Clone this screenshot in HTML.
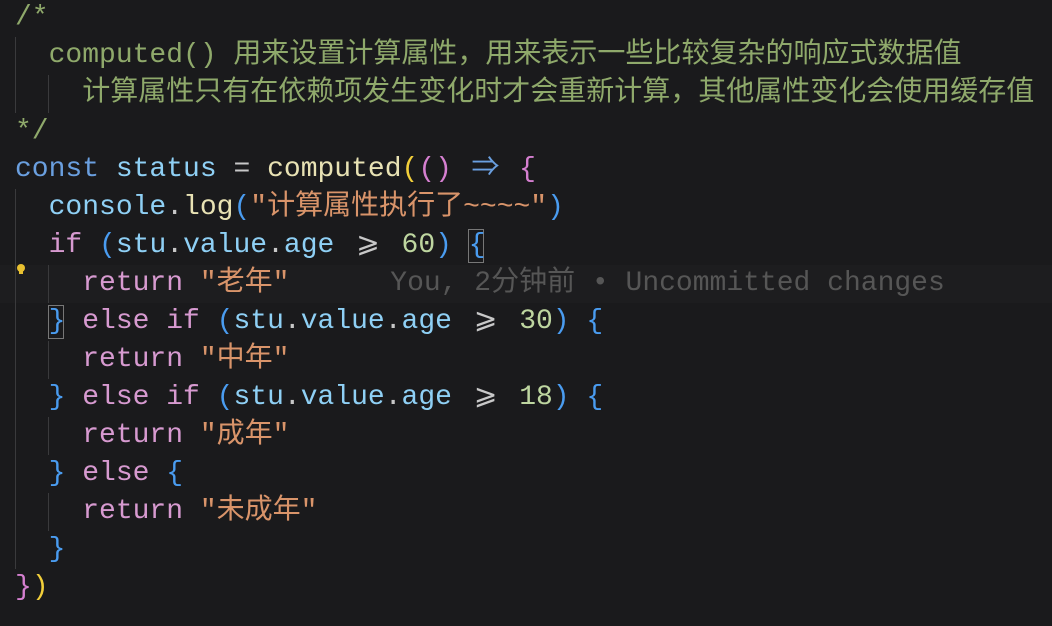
<!DOCTYPE html>
<html><head><meta charset="utf-8"><style>
html,body{margin:0;padding:0;background:#1a1a1c;width:1052px;height:626px;overflow:hidden}
.l{position:absolute;left:15px;height:38px;line-height:38px;white-space:pre;font-family:"Liberation Mono","Noto Sans CJK SC",monospace;font-size:28px;color:#d4d4d4}
.g{position:absolute;width:1px;background:#3a3a3c}
.cm{color:#8fa96b}.kw{color:#6a9fdf}.v{color:#8fd0f5}.fn{color:#e8e2b4}.y{color:#f2cf3a}.p{color:#d57fd0}
.s{color:#d9946a}.k{color:#d79ad0}.n{color:#bed6a0}.b{color:#4a9cf0}.w{color:#c8c8c8}.bl{color:#565656}
.lg{display:inline-block;width:33.6px;text-align:center}
</style></head><body>
<div style="position:absolute;left:0;top:265px;width:1052px;height:38px;background:#1d1d1f"></div>
<div class="g" style="left:15px;top:37px;height:76px"></div>
<div class="g" style="left:48px;top:75px;height:38px"></div>
<div class="g" style="left:15px;top:189px;height:380px"></div>
<div class="g" style="left:48px;top:265px;height:38px"></div>
<div class="g" style="left:48px;top:341px;height:38px"></div>
<div class="g" style="left:48px;top:417px;height:38px"></div>
<div class="g" style="left:48px;top:493px;height:38px"></div>
<div style="position:absolute;left:468px;top:229px;width:14px;height:32px;border:1px solid #777"></div>
<div style="position:absolute;left:48px;top:305px;width:14px;height:32px;border:1px solid #777"></div>
<div style="position:absolute;left:17px;top:264px;width:8px;height:8px;border-radius:50%;background:#e8c030"></div>
<div style="position:absolute;left:19px;top:271px;width:4px;height:3px;background:#e8c030"></div>

<div class="l cm" style="top:-1px">/*</div>
<div class="l cm" style="top:37px">  computed() 用来设置计算属性，用来表示一些比较复杂的响应式数据值</div>
<div class="l cm" style="top:75px">    计算属性只有在依赖项发生变化时才会重新计算，其他属性变化会使用缓存值</div>
<div class="l cm" style="top:113px">*/</div>
<div class="l" style="top:151px"><span class="kw">const</span> <span class="v">status</span> <span class="w">=</span> <span class="fn">computed</span><span class="y">(</span><span class="p">()</span> <span class="kw lg">⇒</span> <span class="p">{</span></div>
<div class="l" style="top:189px">  <span class="v">console</span><span class="w">.</span><span class="fn">log</span><span class="b">(</span><span class="s">"计算属性执行了~~~~"</span><span class="b">)</span></div>
<div class="l" style="top:227px">  <span class="k">if</span> <span class="b">(</span><span class="v">stu</span><span class="w">.</span><span class="v">value</span><span class="w">.</span><span class="v">age</span> <span class="w lg">⩾</span> <span class="n">60</span><span class="b">)</span> <span class="b">{</span></div>
<div class="l" style="top:265px">    <span class="k">return</span> <span class="s">"老年"</span>      <span class="bl">You, 2分钟前 • Uncommitted changes</span></div>
<div class="l" style="top:303px">  <span class="b">}</span> <span class="k">else if</span> <span class="b">(</span><span class="v">stu</span><span class="w">.</span><span class="v">value</span><span class="w">.</span><span class="v">age</span> <span class="w lg">⩾</span> <span class="n">30</span><span class="b">)</span> <span class="b">{</span></div>
<div class="l" style="top:341px">    <span class="k">return</span> <span class="s">"中年"</span></div>
<div class="l" style="top:379px">  <span class="b">}</span> <span class="k">else if</span> <span class="b">(</span><span class="v">stu</span><span class="w">.</span><span class="v">value</span><span class="w">.</span><span class="v">age</span> <span class="w lg">⩾</span> <span class="n">18</span><span class="b">)</span> <span class="b">{</span></div>
<div class="l" style="top:417px">    <span class="k">return</span> <span class="s">"成年"</span></div>
<div class="l" style="top:455px">  <span class="b">}</span> <span class="k">else</span> <span class="b">{</span></div>
<div class="l" style="top:493px">    <span class="k">return</span> <span class="s">"未成年"</span></div>
<div class="l" style="top:531px">  <span class="b">}</span></div>
<div class="l" style="top:569px"><span class="p">}</span><span class="y">)</span></div>
</body></html>
